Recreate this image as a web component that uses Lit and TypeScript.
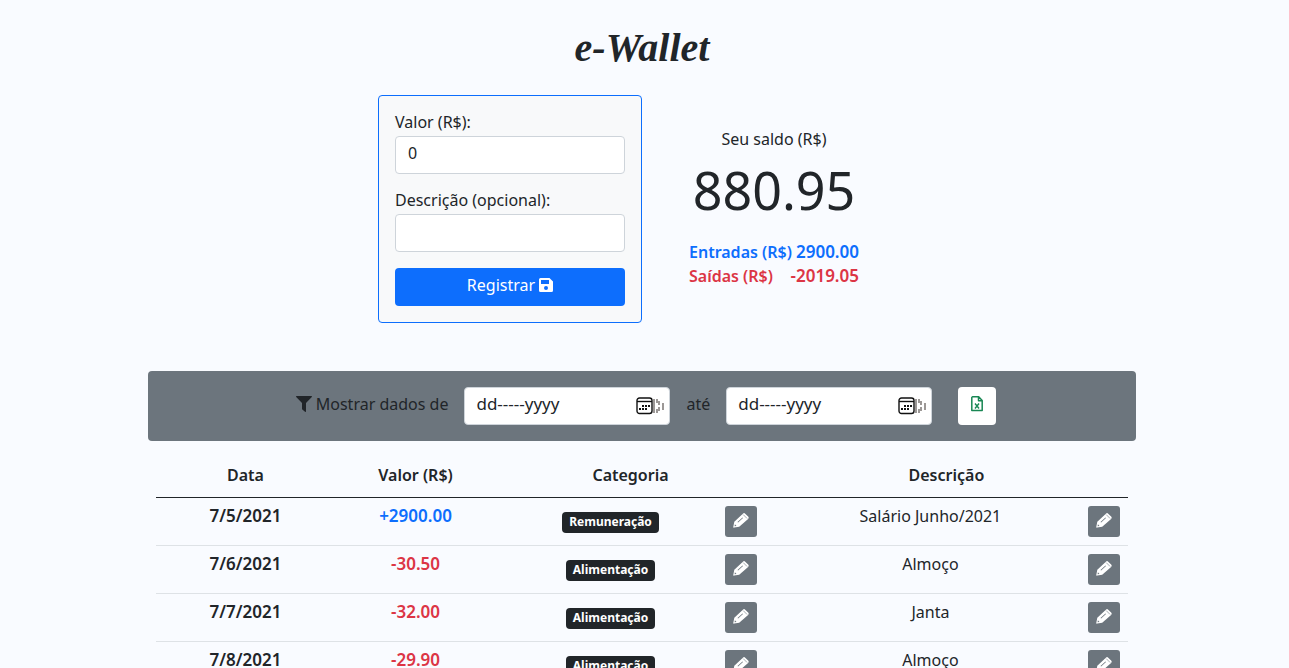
import { LitElement, html, css, svg } from "lit";
import { customElement, property } from "lit/decorators.js";
import { classMap } from "lit/directives/class-map.js";

interface Entry {
  date: string;
  value: number;
  category: string;
  description: string;
}

const ENTRIES: Entry[] = [
  { date: "7/5/2021", value: 2900, category: "Remuneração", description: "Salário Junho/2021" },
  { date: "7/6/2021", value: -30.5, category: "Alimentação", description: "Almoço" },
  { date: "7/7/2021", value: -32, category: "Alimentação", description: "Janta" },
  { date: "7/8/2021", value: -29.9, category: "Alimentação", description: "Almoço" },
];

const pencil = svg`<path fill="currentColor" fill-rule="evenodd" d="M1.300 9.700 9.900 1.700a1.600 1.600 0 0 1 2.300 0l2.900 2.900a1.600 1.600 0 0 1 0 2.300L6.200 14.700 1.200 15.600a.7.7 0 0 1-.9-.9zM1.900 12.300l-.3 1.900 1.900-.3zM4.500 9.900l.6.6 4.900-4.600-.5-.5z"/><path stroke="#6c757d" stroke-width=".6" d="M10.200 2.600l3.900 3.900"/>`;

const base = css`
  *,
  *::before,
  *::after {
    box-sizing: border-box;
  }
  button,
  input {
    font: inherit;
    color: inherit;
    margin: 0;
  }
  button {
    cursor: pointer;
  }
  svg {
    display: block;
    flex: none;
  }
`;

@customElement("date-field")
class DateField extends LitElement {
  @property() label = "";

  static styles = [
    base,
    css`
      :host {
        display: block;
        width: 206px;
      }
      .box {
        display: flex;
        align-items: center;
        height: 38px;
        padding: 0 4px 0 11px;
        background: #fff;
        border: 1px solid #ced4da;
        border-radius: 4px;
      }
      .text {
        flex: 1;
        min-width: 0;
        padding: 0 0 4px;
        border: 0;
        outline: 0;
        background: none;
        font-size: 17px;
        line-height: 24px;
      }
      .text::placeholder {
        color: #212529;
        opacity: 1;
      }
      .picker {
        padding: 0;
        border: 0;
        background: none;
      }
    `,
  ];

  render() {
    return html`<div class="box">
      <input class="text" type="text" placeholder="dd-----yyyy" aria-label=${this.label} />
      <button class="picker" type="button" aria-label="Abrir calendário">
        <svg width="29" height="18" viewBox="0 0 29 18">
          <rect x="1" y="1" width="15" height="15.500" rx="2.500" fill="none" stroke="#111" stroke-width="1.400" />
          <path d="M1 4.500h15" stroke="#111" stroke-width="1.400" />
          <path
            fill="#111"
            d="M6 8h2v2H6zM9 8h2v2H9zM12 8h2v2h-2zM3 11h2v2H3zM6 11h2v2H6zM9 11h2v2H9z"
          />
          <path
            fill="#9c9896"
            d="M17 2h2v14h-2zM20 2h2v4h-2zM20 12h2v4h-2zM22 4h2v4h-2zM22 10h2v4h-2zM26 6h2v7h-2z"
          />
        </svg>
      </button>
    </div>`;
  }
}

@customElement("app-root")
class AppRoot extends LitElement {
  static styles = [
    base,
    css`
      :host {
        display: block;
        min-height: 100vh;
        padding: 24px 5px 24px 0;
        background: #f9fbff;
        color: #212529;
        font: 16px/24px "Noto Sans", "Open Sans", sans-serif;
      }
      .title {
        margin: 0 0 23px;
        font: italic 700 40px/48px "Liberation Serif", serif;
        text-align: center;
      }
      .summary {
        display: grid;
        grid-template-columns: repeat(2, 264px);
        justify-content: center;
      }
      .card {
        display: flex;
        flex-direction: column;
        gap: 16px;
        padding: 14px 16px 16px;
        background: #f8f9fa;
        border: 1px solid #0d6efd;
        border-radius: 4px;
      }
      .fields {
        display: grid;
        gap: 14px;
      }
      .control {
        display: block;
        width: 100%;
        height: 38px;
        margin-top: 2px;
        padding: 4px 12px 8px;
        background: #fff;
        border: 1px solid #ced4da;
        border-radius: 4px;
      }
      .submit {
        display: flex;
        justify-content: center;
        align-items: center;
        gap: 4px;
        height: 38px;
        padding: 0 0 4px;
        color: #fff;
        background: #0d6efd;
        border: 0;
        border-radius: 4px;
      }
      .balance {
        padding-top: 32px;
        text-align: center;
      }
      .total {
        margin: 12px 0 24px;
        font-size: 52px;
        line-height: 53px;
      }
      .flows {
        margin: 0 auto;
        width: 170px;
        font-weight: 600;
      }
      .flow {
        display: flex;
        justify-content: space-between;
        white-space: nowrap;
      }
      .sum {
        font-size: 17px;
      }
      .in {
        color: #0d6efd;
      }
      .out {
        color: #dc3545;
      }
      .panel {
        max-width: 988px;
        margin: 48px auto 0;
      }
      .filter {
        display: flex;
        justify-content: center;
        align-items: center;
        gap: 16px;
        padding: 16px 16px 16px 24px;
        background: #6c757d;
        border-radius: 4px;
      }
      .range {
        display: flex;
        align-items: center;
        gap: 4px;
        padding-bottom: 4px;
        white-space: nowrap;
      }
      .export {
        display: flex;
        justify-content: center;
        align-items: center;
        width: 38px;
        height: 38px;
        margin-left: 10px;
        padding: 0 0 4px;
        color: #198754;
        background: #fff;
        border: 0;
        border-radius: 4px;
      }
      .list {
        padding: 16px 8px 0;
      }
      .table {
        width: 100%;
        table-layout: fixed;
        border-collapse: collapse;
        text-align: center;
      }
      .day {
        width: 18.4%;
      }
      .amount {
        width: 16.6%;
      }
      .kind {
        width: 22.7%;
      }
      .tool {
        width: 48px;
      }
      th,
      td {
        padding: 6px 8px 10px;
        vertical-align: top;
        font-weight: 400;
        border-bottom: 1px solid #dee2e6;
      }
      th,
      .strong {
        font-weight: 600;
      }
      tbody th,
      .strong {
        font-size: 17px;
      }
      thead th {
        border-bottom-color: #212529;
      }
      .action {
        padding: 8px;
      }
      .kindcell {
        padding: 14px 8px 8px 16px;
      }
      .notecell {
        padding-left: 24px;
      }
      .badge {
        display: block;
        width: fit-content;
        margin: 0 auto;
        padding: 3px 7px 5px;
        border-radius: 4px;
        background: #212529;
        color: #fff;
        font-size: 12px;
        font-weight: 700;
        line-height: 13px;
      }
      .edit {
        display: flex;
        justify-content: center;
        align-items: center;
        width: 32px;
        height: 31px;
        padding: 0 0 3px;
        color: #fff;
        background: #6c757d;
        border: 0;
        border-radius: 3px;
      }
    `,
  ];

  private signed(v: number) {
    return (v > 0 ? "+" : "") + v.toFixed(2);
  }

  private editButton(label: string) {
    return html`<button class="edit" type="button" aria-label=${label}>
      <svg width="16" height="16" viewBox="0 0 16 16">${pencil}</svg>
    </button>`;
  }

  private row(e: Entry) {
    return html`<tr>
      <th scope="row">${e.date}</th>
      <td class=${classMap({ strong: true, in: e.value > 0, out: e.value < 0 })}>${this.signed(e.value)}</td>
      <td class="kindcell"><span class="badge">${e.category}</span></td>
      <td class="action">${this.editButton("Editar categoria")}</td>
      <td class="notecell">${e.description}</td>
      <td class="action">${this.editButton("Editar descrição")}</td>
    </tr>`;
  }

  render() {
    return html`
      <h1 class="title">e-Wallet</h1>
      <section class="summary">
        <form class="card" @submit=${(e: Event) => e.preventDefault()}>
          <div class="fields">
            <label>Valor (R$):<input class="control" type="text" inputmode="decimal" value="0" /></label>
            <label>Descrição (opcional):<input class="control" type="text" /></label>
          </div>
          <button class="submit" type="submit">
            Registrar
            <svg width="14" height="14" viewBox="0 0 14 14">
              <path
                fill="currentColor"
                fill-rule="evenodd"
                d="M1.500 0h9L14 3.500v9a1.500 1.500 0 0 1-1.500 1.500h-11A1.500 1.500 0 0 1 0 12.500v-11A1.500 1.500 0 0 1 1.500 0zM2 2v4h8V2zM7 8a2 2 0 1 0 0 4 2 2 0 0 0 0-4z"
              />
            </svg>
          </button>
        </form>
        <div class="balance">
          <div>Seu saldo (R$)</div>
          <div class="total">880.95</div>
          <div class="flows">
            <div class="flow in"><span>Entradas (R$)</span><span class="sum">2900.00</span></div>
            <div class="flow out"><span>Saídas (R$)</span><span class="sum">-2019.05</span></div>
          </div>
        </div>
      </section>
      <section class="panel">
        <div class="filter">
          <span class="range">
            <svg width="16" height="16" viewBox="0 0 16 16">
              <path fill="currentColor" d="M.7 0h14.600a.6.6 0 0 1 .5 1L10 7v8.300a.6.6 0 0 1-1 .5L6.300 13.500A.8.8 0 0 1 6 13V7L.2 1a.6.6 0 0 1 .5-1z" />
            </svg>
            Mostrar dados de
          </span>
          <date-field label="Data inicial"></date-field>
          <span class="range">até</span>
          <date-field label="Data final"></date-field>
          <button class="export" type="button" aria-label="Exportar planilha">
            <svg width="12" height="16" viewBox="0 0 12 16" fill="none" stroke="currentColor">
              <path stroke-width="1.500" stroke-linejoin="round" d="M.8 1.500v13h10.400V4.500L7.700.8H1.500zM7.500 1v3.700h3.500" />
              <path stroke-width="1.400" d="M4 7.500l4 5M8 7.500l-4 5" />
            </svg>
          </button>
        </div>
        <div class="list">
          <table class="table">
            <colgroup>
              <col class="day" /><col class="amount" /><col class="kind" /><col class="tool" /><col /><col class="tool" />
            </colgroup>
            <thead>
              <tr>
                <th scope="col">Data</th>
                <th scope="col">Valor (R$)</th>
                <th scope="col" colspan="2">Categoria</th>
                <th scope="col" colspan="2">Descrição</th>
              </tr>
            </thead>
            <tbody>
              ${ENTRIES.map((e) => this.row(e))}
            </tbody>
          </table>
        </div>
      </section>
    `;
  }
}
